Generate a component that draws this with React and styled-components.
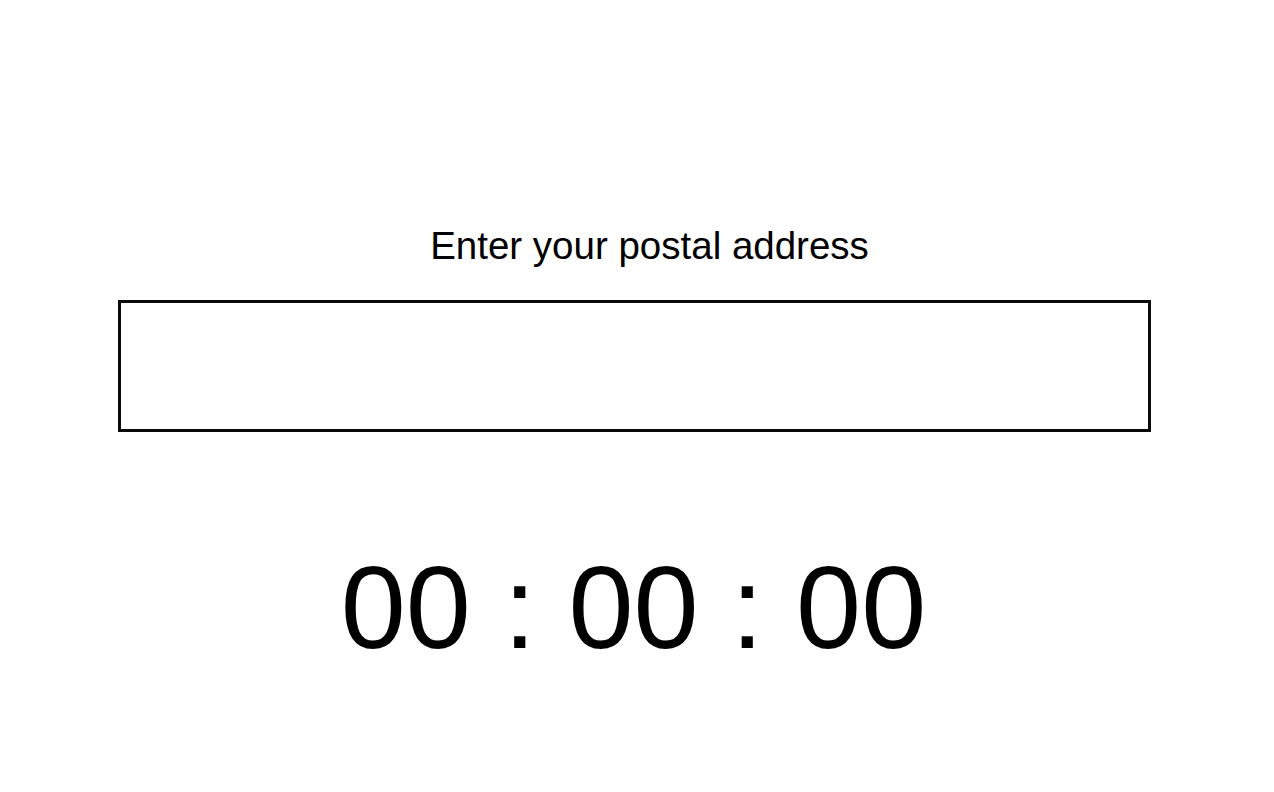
import React from "react";
import styled, { createGlobalStyle } from "styled-components";

const Global = createGlobalStyle`
  html, body { margin: 0; padding: 0; background: #fff; }
  body { font-family: "Liberation Sans", Arial, Helvetica, sans-serif; color: #000; }
`;

const Page = styled.main`
  display: flex;
  flex-direction: column;
  align-items: stretch;
  padding: 222px 123px 0 118px;
`;

const Heading = styled.h1`
  margin: 0;
  font-size: 38.5px;
  font-weight: 400;
  line-height: 48px;
  text-align: center;
  padding-left: 30px;
`;

const AddressInput = styled.textarea`
  box-sizing: border-box;
  margin-top: 30px;
  width: 100%;
  height: 132px;
  border: 3px solid #0a0a0a;
  border-radius: 0;
  resize: none;
  outline: none;
  font-family: inherit;
  font-size: 24px;
  padding: 12px;
  background: #fff;
`;

const Timer = styled.div`
  margin-top: 106px;
  font-size: 117px;
  line-height: 140px;
  text-align: center;
  white-space: pre;
  padding-right: 2px;
`;

export default function App() {
  return (
    <>
      <Global />
      <Page>
        <Heading>Enter your postal address</Heading>
        <AddressInput aria-label="Postal address" />
        <Timer>00 : 00 : 00</Timer>
      </Page>
    </>
  );
}
